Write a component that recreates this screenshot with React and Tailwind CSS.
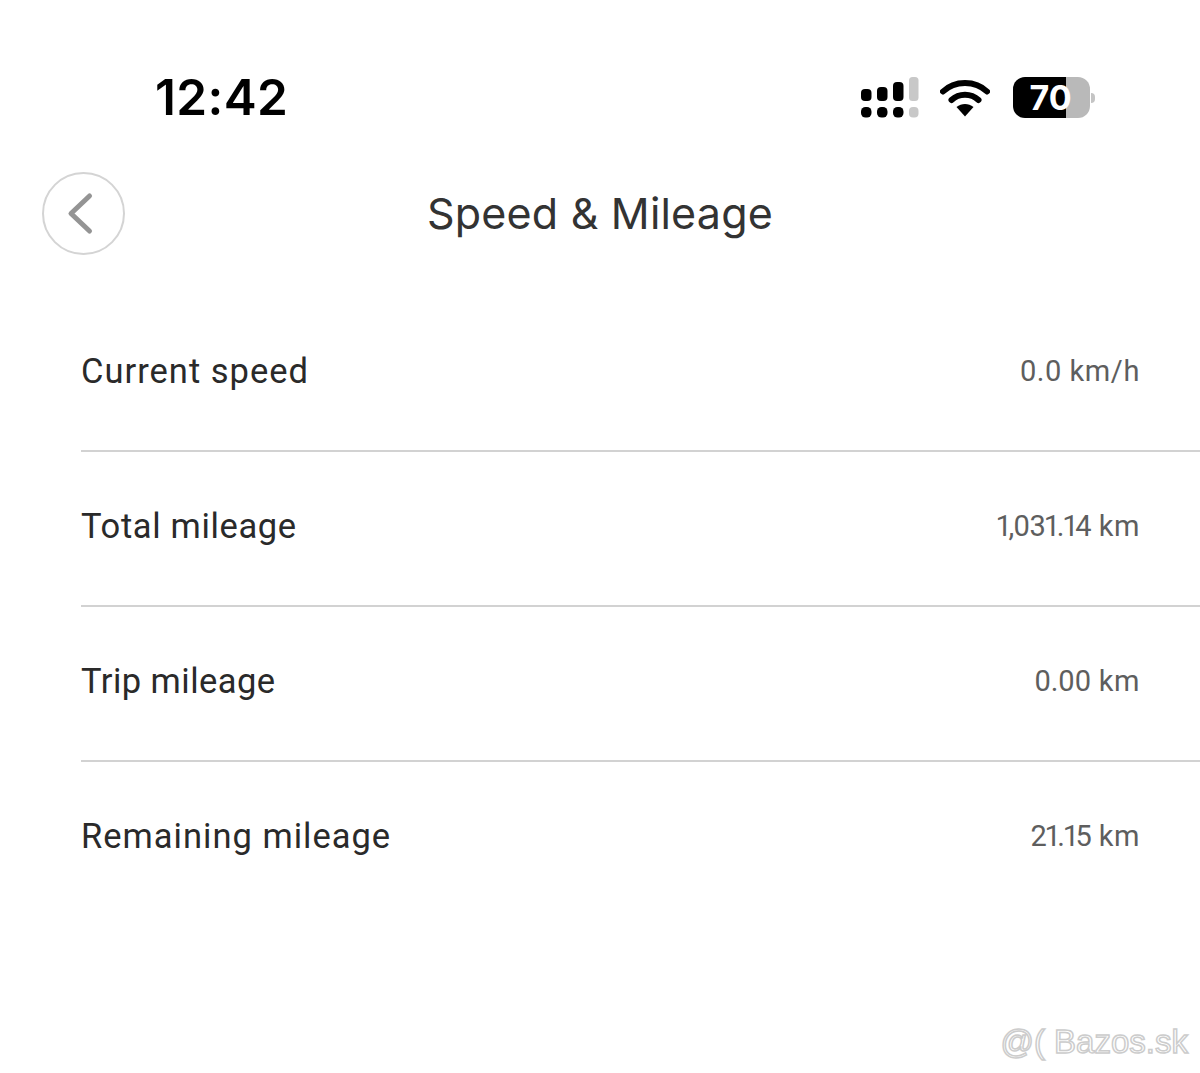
function SignalIcon() {
  return (
    <svg width="58" height="41" viewBox="0 0 58 41" fill="none">
      <rect x="0" y="12" width="10.5" height="12" rx="4" fill="#000" />
      <rect x="16" y="10" width="10.5" height="14" rx="4" fill="#000" />
      <rect x="32" y="5" width="10.5" height="19" rx="4" fill="#000" />
      <rect x="48" y="0" width="9.5" height="24" rx="3.5" fill="#c8c8c8" />
      <rect x="0" y="30" width="10.5" height="10.5" rx="4.5" fill="#000" />
      <rect x="16" y="30" width="10.5" height="10.5" rx="4.5" fill="#000" />
      <rect x="32" y="30" width="10.5" height="10.5" rx="4.5" fill="#000" />
      <rect x="48" y="30" width="9.5" height="10.5" rx="4" fill="#c8c8c8" />
    </svg>
  );
}

function WifiIcon() {
  return (
    <svg width="50" height="38" viewBox="0 0 50 38" fill="none">
      <path d="M3 12.5C14.5 1 35.5 1 47 12.5" stroke="#000" strokeWidth="6" strokeLinecap="round" />
      <path d="M11.5 21C19 14 31 14 38.5 21" stroke="#000" strokeWidth="6" strokeLinecap="round" />
      <path d="M16.5 28C21.5 24 28.5 24 33.5 28L25 37.5Z" fill="#000" />
    </svg>
  );
}

function Battery() {
  return (
    <div className="flex items-center">
      <div className="relative flex h-[41px] w-[77px] items-center justify-center overflow-hidden rounded-[12px] bg-[linear-gradient(to_right,#000_0,#000_53px,#b9b9b9_53px)]">
        <span className="-translate-x-px text-[34px] font-bold leading-none text-white [font-family:Inter,sans-serif]">70</span>
      </div>
      <div className="ml-px h-[10px] w-[4px] rounded-r-full bg-[#c4c4c4]" />
    </div>
  );
}

function Row({ label, tracking, number, numberTracking, unit, last }) {
  return (
    <div className={`ml-[81px] flex h-[155px] items-center justify-between border-b-2 pb-[4px] pr-[60px] ${last ? "border-transparent" : "border-[#d2d2d2]"}`}>
      <span className={`text-[34.5px] text-[#2a2a2a] [font-family:Roboto,sans-serif] ${tracking}`}>{label}</span>
      <span className="proportional-nums text-[29px] text-[#5e5e5e] [font-family:Roboto,sans-serif]">
        <span className={numberTracking}>{number}</span>
        <span className="tracking-[0.6px]"> {unit}</span>
      </span>
    </div>
  );
}

export default function App() {
  const rows = [
    { label: "Current speed", tracking: "tracking-[1px]", number: "0.0", numberTracking: "tracking-[0.2px]", unit: "km/h" },
    { label: "Total mileage", tracking: "tracking-[0.65px]", number: "1,031.14", numberTracking: "tracking-[-0.8px]", unit: "km" },
    { label: "Trip mileage", tracking: "tracking-[0.45px]", number: "0.00", numberTracking: "tracking-[-0.4px]", unit: "km" },
    { label: "Remaining mileage", tracking: "tracking-[1px]", number: "21.15", numberTracking: "tracking-[-1px]", unit: "km" },
  ];
  return (
    <div className="relative h-[1073px] w-[1200px] overflow-hidden bg-white">
      <div className="flex h-[172px] items-start justify-between pl-[155px] pr-[105px] pt-[68px]">
        <span className="text-[49.5px] font-semibold leading-[58px] tracking-[0.4px] text-black [font-family:Inter,sans-serif]">12:42</span>
        <div className="flex items-center pt-[9px]">
          <SignalIcon />
          <div className="ml-[21px]"><WifiIcon /></div>
          <div className="ml-[23px]"><Battery /></div>
        </div>
      </div>
      <div className="relative flex h-[83px] items-center justify-center">
        <div className="absolute left-[42px] top-0 flex h-[83px] w-[83px] items-center justify-center rounded-full border-2 border-[#d4d4d4]">
          <svg width="28" height="44" viewBox="0 0 28 44" fill="none" className="mr-[8px]">
            <path d="M23.5 4L5 21.5L23.5 39" stroke="#949494" strokeWidth="5" strokeLinecap="round" strokeLinejoin="round" />
          </svg>
        </div>
        <span className="text-[43px] leading-none tracking-[0.2px] text-[#333333] [font-family:Inter,sans-serif]">Speed &amp; Mileage</span>
      </div>
      <div className="mt-[42px]">
        {rows.map((r, i) => (
          <Row key={r.label} {...r} last={i === rows.length - 1} />
        ))}
      </div>
      <div className="absolute right-[12px] top-[1020px] flex items-center text-[33px] leading-[44px] text-white [-webkit-text-stroke:1.5px_#cccccc] [font-family:'Liberation_Sans',sans-serif]">
        <span>@(</span>
        <span className="ml-[9px]">Bazos.sk</span>
      </div>
    </div>
  );
}
